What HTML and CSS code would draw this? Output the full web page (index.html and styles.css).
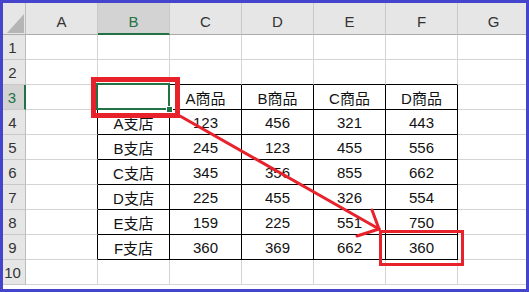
FILE: index.html
```html
<!DOCTYPE html>
<html lang="ja">
<head>
<meta charset="utf-8">
<link rel="stylesheet" href="styles.css">
</head>
<body>
<div class="frame">
  <div class="sheet">
    <div class="corner"><svg width="22" height="31" viewBox="0 0 22 31"><polygon points="21,11 4,30 21,30" fill="#b5b5b5"/></svg></div>
    <div class="ch">A</div><div class="ch sel">B</div><div class="ch">C</div><div class="ch">D</div><div class="ch">E</div><div class="ch">F</div><div class="ch">G</div>

    <div class="rh">1</div><div class="c"></div><div class="c"></div><div class="c"></div><div class="c"></div><div class="c"></div><div class="c"></div><div class="c"></div>
    <div class="rh">2</div><div class="c"></div><div class="c bt"></div><div class="c bt"></div><div class="c bt"></div><div class="c bt"></div><div class="c bt"></div><div class="c"></div>
    <div class="rh sel">3</div><div class="c bl"></div><div class="c t active"><span class="handle"></span></div><div class="c t">A商品</div><div class="c t">B商品</div><div class="c t">C商品</div><div class="c t">D商品</div><div class="c"></div>
    <div class="rh">4</div><div class="c bl"></div><div class="c t">A支店</div><div class="c t">123</div><div class="c t">456</div><div class="c t">321</div><div class="c t">443</div><div class="c"></div>
    <div class="rh">5</div><div class="c bl"></div><div class="c t">B支店</div><div class="c t">245</div><div class="c t">123</div><div class="c t">455</div><div class="c t">556</div><div class="c"></div>
    <div class="rh">6</div><div class="c bl"></div><div class="c t">C支店</div><div class="c t">345</div><div class="c t">356</div><div class="c t">855</div><div class="c t">662</div><div class="c"></div>
    <div class="rh">7</div><div class="c bl"></div><div class="c t">D支店</div><div class="c t">225</div><div class="c t">455</div><div class="c t">326</div><div class="c t">554</div><div class="c"></div>
    <div class="rh">8</div><div class="c bl"></div><div class="c t">E支店</div><div class="c t">159</div><div class="c t">225</div><div class="c t">551</div><div class="c t">750</div><div class="c"></div>
    <div class="rh">9</div><div class="c bl"></div><div class="c t">F支店</div><div class="c t">360</div><div class="c t">369</div><div class="c t">662</div><div class="c t">360</div><div class="c"></div>
    <div class="rh">10</div><div class="c"></div><div class="c"></div><div class="c"></div><div class="c"></div><div class="c"></div><div class="c"></div><div class="c"></div>
  </div>
  <div class="mark mark-a"></div>
  <div class="mark mark-b"></div>
  <svg class="arrow" width="529" height="292" viewBox="0 0 529 292">
    <g stroke="#e8222b" stroke-width="3" stroke-linecap="round" fill="none">
      <line x1="180" y1="116" x2="379" y2="229"/>
      <line x1="372" y1="210" x2="379" y2="229"/>
      <line x1="357" y1="236" x2="379" y2="229"/>
    </g>
  </svg>
</div>
</body>
</html>
```
FILE: styles.css
```css
html, body {
  margin: 0;
  padding: 0;
  background: #ffffff;
}

.frame {
  position: relative;
  width: 529px;
  height: 292px;
  box-sizing: border-box;
  border: 3px solid #4444cc;
  overflow: hidden;
  font-family: "Liberation Sans", "Noto Sans CJK JP", sans-serif;
  font-size: 15px;
  color: #111;
}

.sheet {
  display: grid;
  grid-template-columns: 23px repeat(7, 72px);
  grid-template-rows: 32px repeat(10, 25px);
  width: 527px;
}

.sheet > div {
  box-sizing: border-box;
  display: flex;
  align-items: center;
  justify-content: center;
  position: relative;
}

.corner {
  background: #e6e6e6;
  border-right: 1px solid #bdbdbd;
  border-bottom: 1px solid #ababab;
  align-items: flex-start !important;
  justify-content: flex-start !important;
}

.corner svg {
  display: block;
}

.ch {
  background: #e6e6e6;
  border-right: 1px solid #c9c9c9;
  border-bottom: 1px solid #ababab;
  padding-top: 6px;
  color: #333;
}

.ch.sel {
  background: #d3d3d3;
  color: #217346;
  border-bottom: 2px solid #217346;
}

.rh {
  background: #e6e6e6;
  border-right: 1px solid #bdbdbd;
  border-bottom: 1px solid #c9c9c9;
  padding-right: 3px;
  color: #333;
}

.rh.sel {
  background: #d3d3d3;
  color: #217346;
  border-right: 2px solid #217346;
}

.c {
  border-right: 1px solid #d4d4d4;
  border-bottom: 1px solid #d4d4d4;
}

.c.bt {
  border-bottom-color: #000;
}

.c.bl {
  border-right-color: #000;
}

.c.t {
  border-right-color: #000;
  border-bottom-color: #000;
}

.c.active::after {
  content: "";
  position: absolute;
  left: -2px;
  top: -2px;
  right: -1px;
  bottom: -1px;
  border: 2px solid #217346;
}

.handle {
  position: absolute;
  right: -4px;
  bottom: -4px;
  width: 5px;
  height: 5px;
  background: #217346;
  border: 1px solid #fff;
  z-index: 2;
}

.mark {
  position: absolute;
  box-sizing: border-box;
  border-style: solid;
  border-color: #e8222b;
}

.mark-a {
  left: 88px;
  top: 74px;
  width: 89px;
  height: 41px;
  border-width: 5px;
}

.mark-b {
  left: 376px;
  top: 227px;
  width: 85px;
  height: 36px;
  border-width: 3px;
}

.arrow {
  position: absolute;
  left: -3px;
  top: -3px;
}
```
